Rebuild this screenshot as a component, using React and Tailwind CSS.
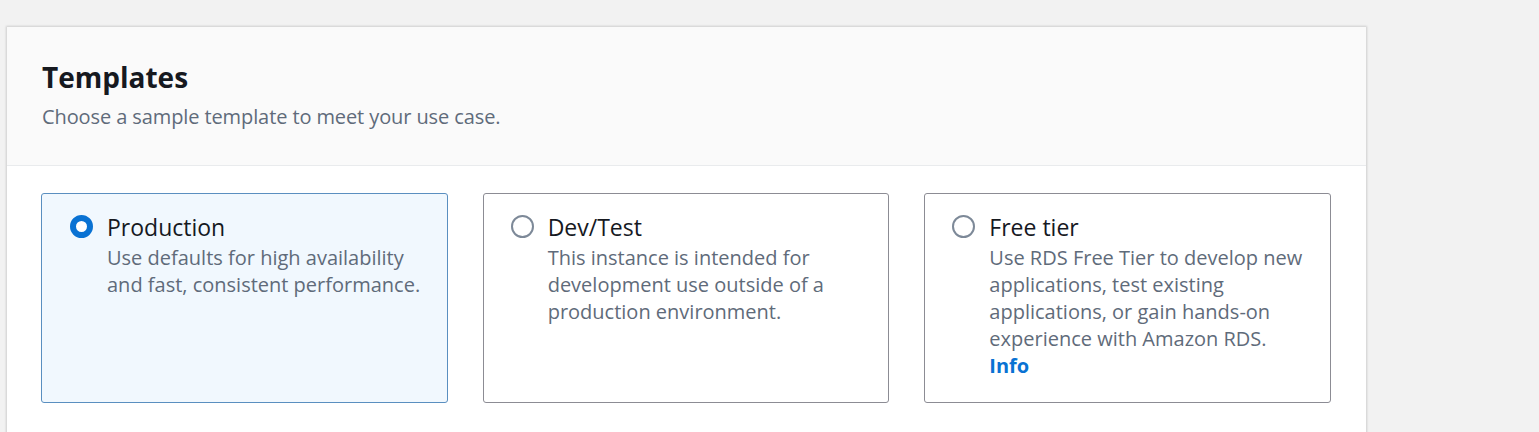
import React from 'react'

const font = { fontFamily: '"Open Sans", "Noto Sans", sans-serif' }

const templates = [
  {
    id: 'production',
    title: 'Production',
    desc: ['Use defaults for high availability', 'and fast, consistent performance.'],
  },
  {
    id: 'devtest',
    title: 'Dev/Test',
    desc: ['This instance is intended for', 'development use outside of a', 'production environment.'],
  },
  {
    id: 'free',
    title: 'Free tier',
    desc: [
      'Use RDS Free Tier to develop new',
      'applications, test existing',
      'applications, or gain hands-on',
      'experience with Amazon RDS.',
    ],
    info: true,
  },
]

function Radio({ checked }) {
  if (checked) {
    return <span className="mt-[3px] block w-[23px] h-[23px] rounded-full border-[6px] border-[#0972d3] bg-white flex-shrink-0" />
  }
  return <span className="mt-[3px] block w-[23px] h-[23px] rounded-full border-2 border-[#7d8998] bg-white flex-shrink-0" />
}

function TemplateCard({ t, selected }) {
  return (
    <div
      className={
        selected
          ? 'h-[210px] rounded-[3px] border border-[#5a8fc0] bg-[#f1f8fe] pl-[28px] pr-4 pt-[18px] flex gap-[14px]'
          : 'h-[210px] rounded-[3px] border border-[#8c8c94] bg-white pl-[27px] pr-4 pt-[18px] flex gap-[14px]'
      }
    >
      <Radio checked={selected} />
      <div>
        <p className="text-[23px] leading-[30px] text-[#16191f]">{t.title}</p>
        <div className="mt-[2px]">
          {t.desc.map((line) => (
            <p key={line} className="text-[20px] leading-[27px] text-[#5f6b7a]">
              {line}
            </p>
          ))}
          {t.info && <p className="text-[20px] leading-[27px] font-bold text-[#0972d3]">Info</p>}
        </div>
      </div>
    </div>
  )
}

export default function App() {
  return (
    <div className="w-[1539px] h-[432px] bg-[#f2f2f2] pt-[27px] overflow-hidden" style={font}>
      <div className="ml-[7px] w-[1359px] bg-white shadow-[0_0_2px_1px_rgba(0,0,0,0.15)]">
        <div className="bg-[#fafafa] border-b border-[#e9ebed] pl-[35px] pt-[33px] h-[139px]">
          <h2 className="text-[28px] leading-[34px] font-bold text-[#16191f]">Templates</h2>
          <p className="mt-[9px] text-[20px] leading-[27px] text-[#5f6b7a] tracking-[-0.1px]">
            Choose a sample template to meet your use case.
          </p>
        </div>
        <div className="pl-[34px] pr-[35px] pt-[27px] pb-[40px] grid grid-cols-3 gap-[35px]">
          {templates.map((t) => (
            <TemplateCard key={t.id} t={t} selected={t.id === 'production'} />
          ))}
        </div>
      </div>
    </div>
  )
}
